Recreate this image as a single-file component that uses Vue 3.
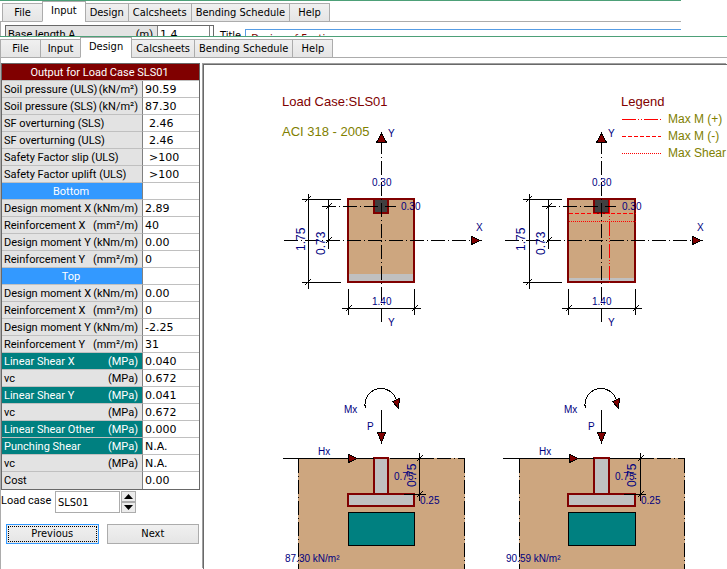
<template>
    <div class="screen">
        <section class="back-window">
            <nav class="tabs">
                <button
                    v-for="tab in tabs"
                    :key="tab"
                    type="button"
                    class="tab"
                    :class="{ active: tab === 'Input' }"
                >{{ tab }}</button>
            </nav>
            <div class="input-page">
                <table class="input-table">
                    <tbody>
                        <tr>
                            <th scope="row"><span class="row-label"><span>Base length A</span><span>(m)</span></span></th>
                            <td>1.4</td>
                            <td class="gutter"></td>
                        </tr>
                    </tbody>
                </table>
                <label for="project-title" class="title-label">Title</label>
                <input id="project-title" v-model="title" type="text" class="title-input">
            </div>
        </section>

        <section class="front-window">
            <nav class="tabs">
                <button
                    v-for="tab in tabs"
                    :key="tab"
                    type="button"
                    class="tab"
                    :class="{ active: tab === activeTab }"
                    @click="activeTab = tab"
                >{{ tab }}</button>
            </nav>
            <div class="design-page">
                <aside class="results">
                    <table class="results-table">
                        <thead>
                            <tr>
                                <th colspan="2" class="caption">Output for Load Case {{ loadCase }}</th>
                            </tr>
                        </thead>
                        <tbody>
                            <tr v-for="(row, i) in rows" :key="i">
                                <th scope="row" :class="row.kind">
                                    <span class="row-label"><span>{{ row.label }}</span><span v-if="row.unit">{{ row.unit }}</span></span>
                                </th>
                                <td :class="{ indent: row.indent }">{{ row.value }}</td>
                            </tr>
                        </tbody>
                    </table>
                    <div class="load-case">
                        <label for="load-case">Load case</label>
                        <input id="load-case" v-model="loadCase" type="text">
                        <div class="spinner">
                            <button type="button" aria-label="Next load case">
                                <svg width="9" height="5" viewBox="0 0 9 5"><path d="M0 5 4.500 0 9 5Z" /></svg>
                            </button>
                            <button type="button" aria-label="Previous load case">
                                <svg width="9" height="5" viewBox="0 0 9 5"><path d="M0 0 4.500 5 9 0Z" /></svg>
                            </button>
                        </div>
                    </div>
                    <div class="actions">
                        <button type="button" class="action focused"><span>Previous</span></button>
                        <button type="button" class="action"><span>Next</span></button>
                    </div>
                </aside>

                <main class="drawing">
                    <svg viewBox="204 65 523 504">
                        <text x="282" y="106" class="heading">Load Case:{{ loadCase }}</text>
                        <text x="282" y="136" class="heading code">ACI 318 - 2005</text>

                        <text x="621" y="106" class="heading">Legend</text>
                        <g v-for="(item, i) in legend" :key="item.label">
                            <line x1="622" x2="661" :y1="119.5 + i * 17" :y2="119.5 + i * 17" class="red" :class="item.style" />
                            <text x="668" :y="123 + i * 17" class="legend-text">{{ item.label }}</text>
                        </g>

                        <g v-for="d in diagrams" :key="d.dx" :transform="`translate(${d.dx} 0)`">
                            <!-- plan view -->
                            <rect x="348" y="199" :width="66 + d.ext" height="83" class="soil" />
                            <rect x="348" :y="282 - d.strip" :width="66 + d.ext" :height="d.strip" class="concrete" />
                            <rect x="348" y="199" :width="66 + d.ext" height="83" class="outline" />
                            <rect x="374" y="199" :width="14 + d.ext" height="14" class="outline column" />
                            <g transform="translate(0.5 0.5)" class="lines">
                                <template v-if="d.moments">
                                    <path d="M348 213H415" class="red dashed" />
                                    <path d="M348 221H415" class="red dotted" />
                                    <path d="M389 199V282" class="red dash-dot-dot" />
                                </template>
                                <path d="M381 321V142" class="axis" />
                                <path :d="`M${283 + d.ext} 240H472`" class="axis" />
                                <path d="M321 206H395" class="axis" />
                                <path d="M376 142H386L381 133Z" class="arrow" />
                                <path :d="`M${471 + d.ext} 236v8l9 -4Z`" class="arrow" />
                                <path :d="`M${308 + d.ext} 193v95m-7 -89h39m-39 83h39m-36 -80l6 -6m-6 89l6 -6`" />
                                <path d="M328 199V248M325 209l6 -6m-6 40l6 -6" />
                                <path :d="`M348 288V314M${414 + d.ext} 288V314M341 308H${420 + d.ext}M345 311l6 -6M${411 + d.ext} 311l6 -6`" />
                            </g>
                            <text x="388" y="137">Y</text>
                            <text x="372" y="186">0.30</text>
                            <text :x="401 + d.ext" y="210">0.30</text>
                            <text :x="476 + d.ext" y="231">X</text>
                            <text x="372" y="305">1.40</text>
                            <text x="388" y="326">Y</text>
                            <text transform="translate(305 251) rotate(-90)" class="dim">1.75</text>
                            <text transform="translate(325 255) rotate(-90)" class="dim">0.73</text>

                            <!-- section view -->
                            <rect :x="298 + d.ext" y="458" :width="167 - d.ext" height="111" class="soil" />
                            <rect x="374" y="458" :width="14 + d.ext" height="36" class="outline concrete" />
                            <rect x="348" y="494" :width="66 + d.ext" height="12" class="outline concrete" />
                            <g transform="translate(0.5 0.5)" class="lines">
                                <path d="M282 458H373M389 458H433" />
                                <path d="M436 458H464" class="axis" />
                                <path :d="`M${298 + d.ext} 458V569`" class="axis" />
                                <path d="M464 458V569" class="axis" />
                                <rect x="348" y="512" :width="66 + d.ext" height="33" class="pressure" />
                                <path d="M381 409V432" />
                                <path d="M377 432H385L381 442Z" class="arrow" />
                                <path :d="`M${348 + d.ext} 454v8l9 -4Z`" class="arrow" />
                                <path d="M365 408A16 16 0 0 1 396 400" />
                                <path d="M392 401L399 398L398 408Z" class="arrow" />
                                <path :d="`M${419 + d.ext} 452v48m-3 -39l6 -6m-6 42l6 -6`" />
                                <path d="M403 494H425" />
                            </g>
                            <text x="344" y="413">Mx</text>
                            <text :x="367 + d.ext" y="430">P</text>
                            <text :x="318 + d.ext" y="455">Hx</text>
                            <text :x="394 + d.ext" y="480">0.75</text>
                            <text transform="translate(416 487) rotate(-90)" class="dim">0.75</text>
                            <text :x="420 + d.ext" y="504">0.25</text>
                            <text :x="285 + d.ext" y="562">{{ d.pressure }} kN/m²</text>
                        </g>
                    </svg>
                </main>
            </div>
        </section>
    </div>
</template>

<script setup>
import { ref } from 'vue';

const tabs = ['File', 'Input', 'Design', 'Calcsheets', 'Bending Schedule', 'Help'];
const activeTab = ref('Design');
const title = ref('Design of Footing');
const loadCase = ref('SLS01');

const rows = [
    { label: 'Soil pressure (ULS)', unit: '(kN/m²)', value: '90.59' },
    { label: 'Soil pressure (SLS)', unit: '(kN/m²)', value: '87.30' },
    { label: 'SF overturning (SLS)', value: '2.46', indent: true },
    { label: 'SF overturning (ULS)', value: '2.46', indent: true },
    { label: 'Safety Factor slip (ULS)', value: '>100', indent: true },
    { label: 'Safety Factor uplift (ULS)', value: '>100', indent: true },
    { label: 'Bottom', kind: 'group' },
    { label: 'Design moment X', unit: '(kNm/m)', value: '2.89' },
    { label: 'Reinforcement X', unit: '(mm²/m)', value: '40' },
    { label: 'Design moment Y', unit: '(kNm/m)', value: '0.00' },
    { label: 'Reinforcement Y', unit: '(mm²/m)', value: '0' },
    { label: 'Top', kind: 'group' },
    { label: 'Design moment X', unit: '(kNm/m)', value: '0.00' },
    { label: 'Reinforcement X', unit: '(mm²/m)', value: '0' },
    { label: 'Design moment Y', unit: '(kNm/m)', value: '-2.25' },
    { label: 'Reinforcement Y', unit: '(mm²/m)', value: '31' },
    { label: 'Linear Shear X', unit: '(MPa)', value: '0.040', kind: 'shear' },
    { label: 'vc', unit: '(MPa)', value: '0.672' },
    { label: 'Linear Shear Y', unit: '(MPa)', value: '0.041', kind: 'shear' },
    { label: 'vc', unit: '(MPa)', value: '0.672' },
    { label: 'Linear Shear Other', unit: '(MPa)', value: '0.000', kind: 'shear' },
    { label: 'Punching Shear', unit: '(MPa)', value: 'N.A.', kind: 'shear' },
    { label: 'vc', unit: '(MPa)', value: 'N.A.' },
    { label: 'Cost', value: '0.00' }
];

const legend = [
    { label: 'Max M (+)', style: 'dash-dot-dot' },
    { label: 'Max M (-)', style: 'dashed' },
    { label: 'Max Shear', style: 'dotted' }
];

// SLS on the left, ULS on the right
const diagrams = [
    { dx: 0, ext: 0, strip: 8, moments: false, pressure: '87.30' },
    { dx: 220, ext: 1, strip: 4, moments: true, pressure: '90.59' }
];
</script>

<style>
body {
    margin: 0;
    background: #fff;
}
</style>

<style scoped>
.screen {
    display: flex;
    flex-direction: column;
    min-height: 100vh;
    font-family: "DejaVu Sans Condensed", "DejaVu Sans", sans-serif;
    font-size: 11px;
    color: #000;
    background: #fff;
}

button,
input {
    box-sizing: border-box;
    margin: 0;
    padding: 0;
    border: 1px solid #acacac;
    border-radius: 0;
    font: inherit;
    color: inherit;
    background: #fff;
}

.back-window {
    height: 35px;
    margin-right: 46px;
    overflow: hidden;
    border-top: 1px solid #4da078;
}

.front-window {
    display: flex;
    flex-direction: column;
    flex: 1;
    border-top: 1px solid #4da078;
}

.tabs {
    display: flex;
    align-items: flex-end;
    height: 21px;
    box-shadow: inset 0 -1px #acacac;
}

.back-window .tabs {
    padding-left: 2px;
}

.tab {
    min-width: 41px;
    height: 19px;
    padding: 0 4px;
    margin-right: -1px;
    line-height: 17px;
    white-space: nowrap;
    background: linear-gradient(#f0f0f0, #e5e5e5);
}

.tab.active {
    height: 21px;
    padding: 0 8px 2px;
    border-bottom-color: #fff;
    background: #fff;
}

.input-page {
    display: flex;
    align-items: flex-start;
    padding: 3px 0 0 4px;
    border-left: 1px solid #acacac;
}

.input-table,
.results-table {
    border: 1px solid #696969;
    border-spacing: 0;
}

.input-table {
    width: 209px;
}

th,
td {
    height: 14px;
    padding: 2px 4px 0 2px;
    border-bottom: 1px solid #c0c0c0;
    line-height: 14px;
    text-align: left;
    white-space: nowrap;
}

th {
    width: 134px;
    border-right: 1px solid #808080;
    font-family: Roboto, "Liberation Sans", sans-serif;
    font-weight: 400;
    background: #e3e3e3;
}

td {
    font-family: "DejaVu Sans", sans-serif;
    background: #fff;
}

.input-table .gutter {
    width: 3px;
    padding: 0;
    border-left: 1px solid #808080;
}

.input-table th {
    width: 145px;
}

.row-label {
    display: flex;
    justify-content: space-between;
}

.title-label {
    padding: 4px 4px 0 6px;
}

.title-input {
    flex: 1;
    height: 18px;
    margin-top: 4px;
    padding: 0 5px;
    border-color: #569de5;
    border-right: 0;
    color: #800000;
}

.design-page {
    display: flex;
    flex: 1;
    align-items: stretch;
    padding-top: 5px;
    border-left: 1px solid #acacac;
}

.results {
    flex: none;
    width: 199px;
}

.results-table {
    width: 199px;
}

.results-table .caption {
    border-right: 0;
    text-align: center;
    color: #fff;
    background: #800000;
}

.results-table tbody tr:last-child > * {
    padding-bottom: 1px;
    border-bottom: 0;
}

.results-table .group {
    color: #fff;
    background: #3399ff;
}

.group .row-label {
    justify-content: center;
}

.results-table .shear {
    color: #fff;
    background: #008080;
}

td.indent {
    padding-left: 6px;
}

.load-case {
    display: flex;
    align-items: flex-start;
    padding-top: 1px;
}

.load-case label {
    width: 54px;
    font-family: Roboto, "Liberation Sans", sans-serif;
    line-height: 19px;
}

.load-case input {
    width: 65px;
    height: 22px;
    padding: 0 2px;
}

.spinner {
    display: flex;
    flex-direction: column;
    width: 15px;
    margin-left: 1px;
}

.spinner button {
    display: flex;
    align-items: center;
    justify-content: center;
    height: 11px;
    background: #ececec;
}

.actions {
    display: flex;
    gap: 8px;
    padding: 11px 1px 0 5px;
}

.action {
    flex: 1;
    height: 20px;
    padding: 1px;
    line-height: 14px;
    background: linear-gradient(#f0f0f0, #e5e5e5);
}

.action span {
    display: block;
    border: 1px solid transparent;
}

.action.focused {
    border-color: #3399ff;
}

.action.focused span {
    border: 1px dotted #000;
}

.drawing {
    flex: 1;
    min-width: 0;
    margin: 1px 0 0 3px;
    border-top: 1px solid #696969;
    border-left: 1px solid #696969;
    box-shadow: -1px -1px #a0a0a0;
}

.drawing svg {
    display: block;
    width: 100%;
    font-family: "Liberation Sans", Arial, sans-serif;
    font-size: 10px;
    fill: #000080;
}

.drawing .heading {
    font-size: 13px;
    fill: #800000;
}

.drawing .code,
.drawing .legend-text {
    fill: #808000;
}

.drawing .legend-text {
    font-size: 12px;
}

.drawing .dim {
    font-size: 12px;
}

.lines {
    fill: none;
    stroke: #000;
    shape-rendering: crispEdges;
}

.soil {
    fill: #cda67f;
}

.concrete {
    fill: #c0c0c0;
}

.outline {
    stroke: #800000;
    stroke-width: 2;
}

.outline:not(.concrete):not(.column) {
    fill: none;
}

.column {
    fill: #404040;
}

.pressure {
    fill: #008080;
}

.arrow {
    fill: #800000;
}

.axis {
    stroke-dasharray: 14 3 1 3;
}

.red {
    stroke: #ff0000;
}

.dashed {
    stroke-dasharray: 4 2;
}

.dotted {
    stroke-dasharray: 1 1;
}

.dash-dot-dot {
    stroke-dasharray: 14 2 1 2 1 2;
}
</style>
